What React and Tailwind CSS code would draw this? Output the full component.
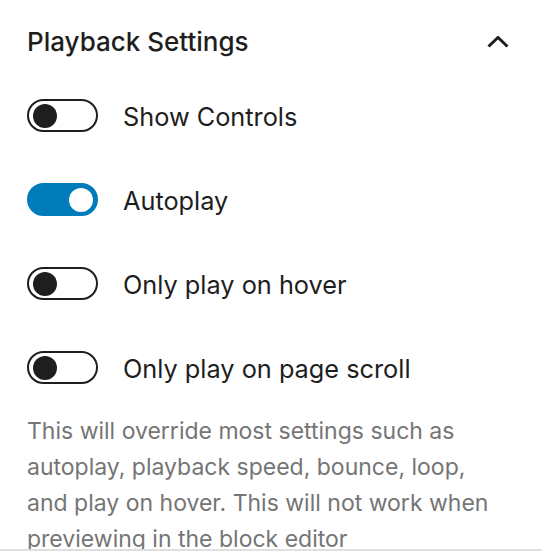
export default function App() {
  const rows = [
    { label: 'Show Controls', on: false },
    { label: 'Autoplay', on: true },
    { label: 'Only play on hover', on: false },
    { label: 'Only play on page scroll', on: false },
  ];

  return (
    <div className="w-[542px] h-[560px] bg-white overflow-hidden font-['Inter',sans-serif] text-[#1e1e1e]">
      <div className="h-[549px] overflow-hidden pl-[27px] pr-[27px] pt-[24px]">
        <div className="flex items-center justify-between h-[36px]">
          <h2 className="text-[26px] leading-[36px] font-medium">Playback Settings</h2>
          <svg width="22" height="12" viewBox="0 0 22 12" className="mr-[6px]" fill="none">
            <polyline points="1.5,10.5 11,1.5 20.5,10.5" stroke="#1e1e1e" strokeWidth="3" />
          </svg>
        </div>

        <div className="mt-[39px] flex flex-col gap-[51px]">
          {rows.map((r) => (
            <div key={r.label} className="flex items-center gap-[25px] h-[33px]">
              <span
                className={
                  r.on
                    ? 'flex items-center justify-end w-[71px] h-[33px] rounded-full bg-[#007cba] border-2 border-[#007cba] pr-[3px]'
                    : 'flex items-center justify-start w-[71px] h-[33px] rounded-full bg-white border-2 border-[#1e1e1e] pl-[4px]'
                }
              >
                <span className={r.on ? 'w-[24px] h-[24px] rounded-full bg-white' : 'w-[24px] h-[24px] rounded-full bg-[#1e1e1e]'} />
              </span>
              <span className="text-[25.3px] leading-[36px] mt-[3px]">{r.label}</span>
            </div>
          ))}
        </div>

        <p className="mt-[29px] max-w-[470px] text-[23px] leading-[36px] text-[#757575]">
          This will override most settings such as autoplay, playback speed, bounce, loop, and play on hover. This will not work when previewing in the block editor
        </p>
      </div>
      <div className="h-[2px] bg-[#e0e0e0]" />
    </div>
  );
}
